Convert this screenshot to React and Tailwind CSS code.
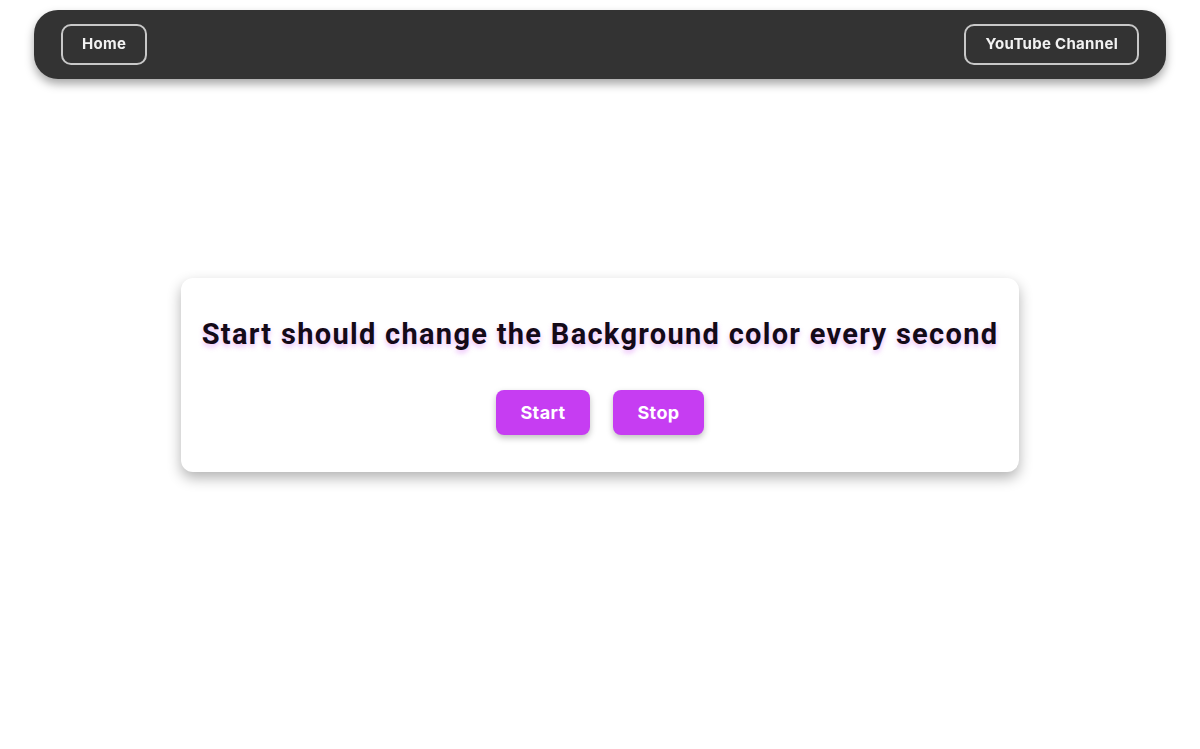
import React from 'react';

const App = () => {
  return (
    <div className="min-h-screen bg-white flex items-center justify-center">

      {/* NAVBAR */}
      <nav className="fixed top-[10px] left-[34px] right-[34px] h-[69px] bg-[#333333] rounded-[24px] shadow-[0_5px_10px_rgba(0,0,0,0.35)] flex items-center justify-between px-[27px]">
        <button className="h-[41px] px-[19px] rounded-[10px] border-2 border-[#c8c8c8] text-[#f2f2f2] text-[15px] font-bold font-['Inter',sans-serif] tracking-[0.3px]">
          Home
        </button>
        <button className="h-[41px] px-[19px] rounded-[10px] border-2 border-[#c8c8c8] text-[#f2f2f2] text-[15px] font-bold font-['Inter',sans-serif] tracking-[0.3px]">
          YouTube Channel
        </button>
      </nav>

      {/* CARD */}
      <div className="w-[838px] h-[194px] bg-white rounded-[12px] shadow-[0_6px_14px_rgba(0,0,0,0.3)] flex flex-col items-center justify-center gap-[39px] pt-[2px]">
        <h1 className="text-[29px] leading-[34px] font-bold text-[#140a18] font-['Roboto',sans-serif] tracking-[1.3px] [text-shadow:0_3px_5px_rgba(200,70,240,0.35)]">
          Start should change the Background color every second
        </h1>
        <div className="flex gap-[23px]">
          <button className="w-[94px] h-[45px] rounded-[8px] bg-[#c63df2] text-white text-[18px] font-bold font-['Inter',sans-serif] tracking-[0.4px] shadow-[0_3px_6px_rgba(0,0,0,0.25)]">
            Start
          </button>
          <button className="w-[91px] h-[45px] rounded-[8px] bg-[#c63df2] text-white text-[18px] font-bold font-['Inter',sans-serif] tracking-[0.4px] shadow-[0_3px_6px_rgba(0,0,0,0.25)]">
            Stop
          </button>
        </div>
      </div>

    </div>
  );
};

export default App;
